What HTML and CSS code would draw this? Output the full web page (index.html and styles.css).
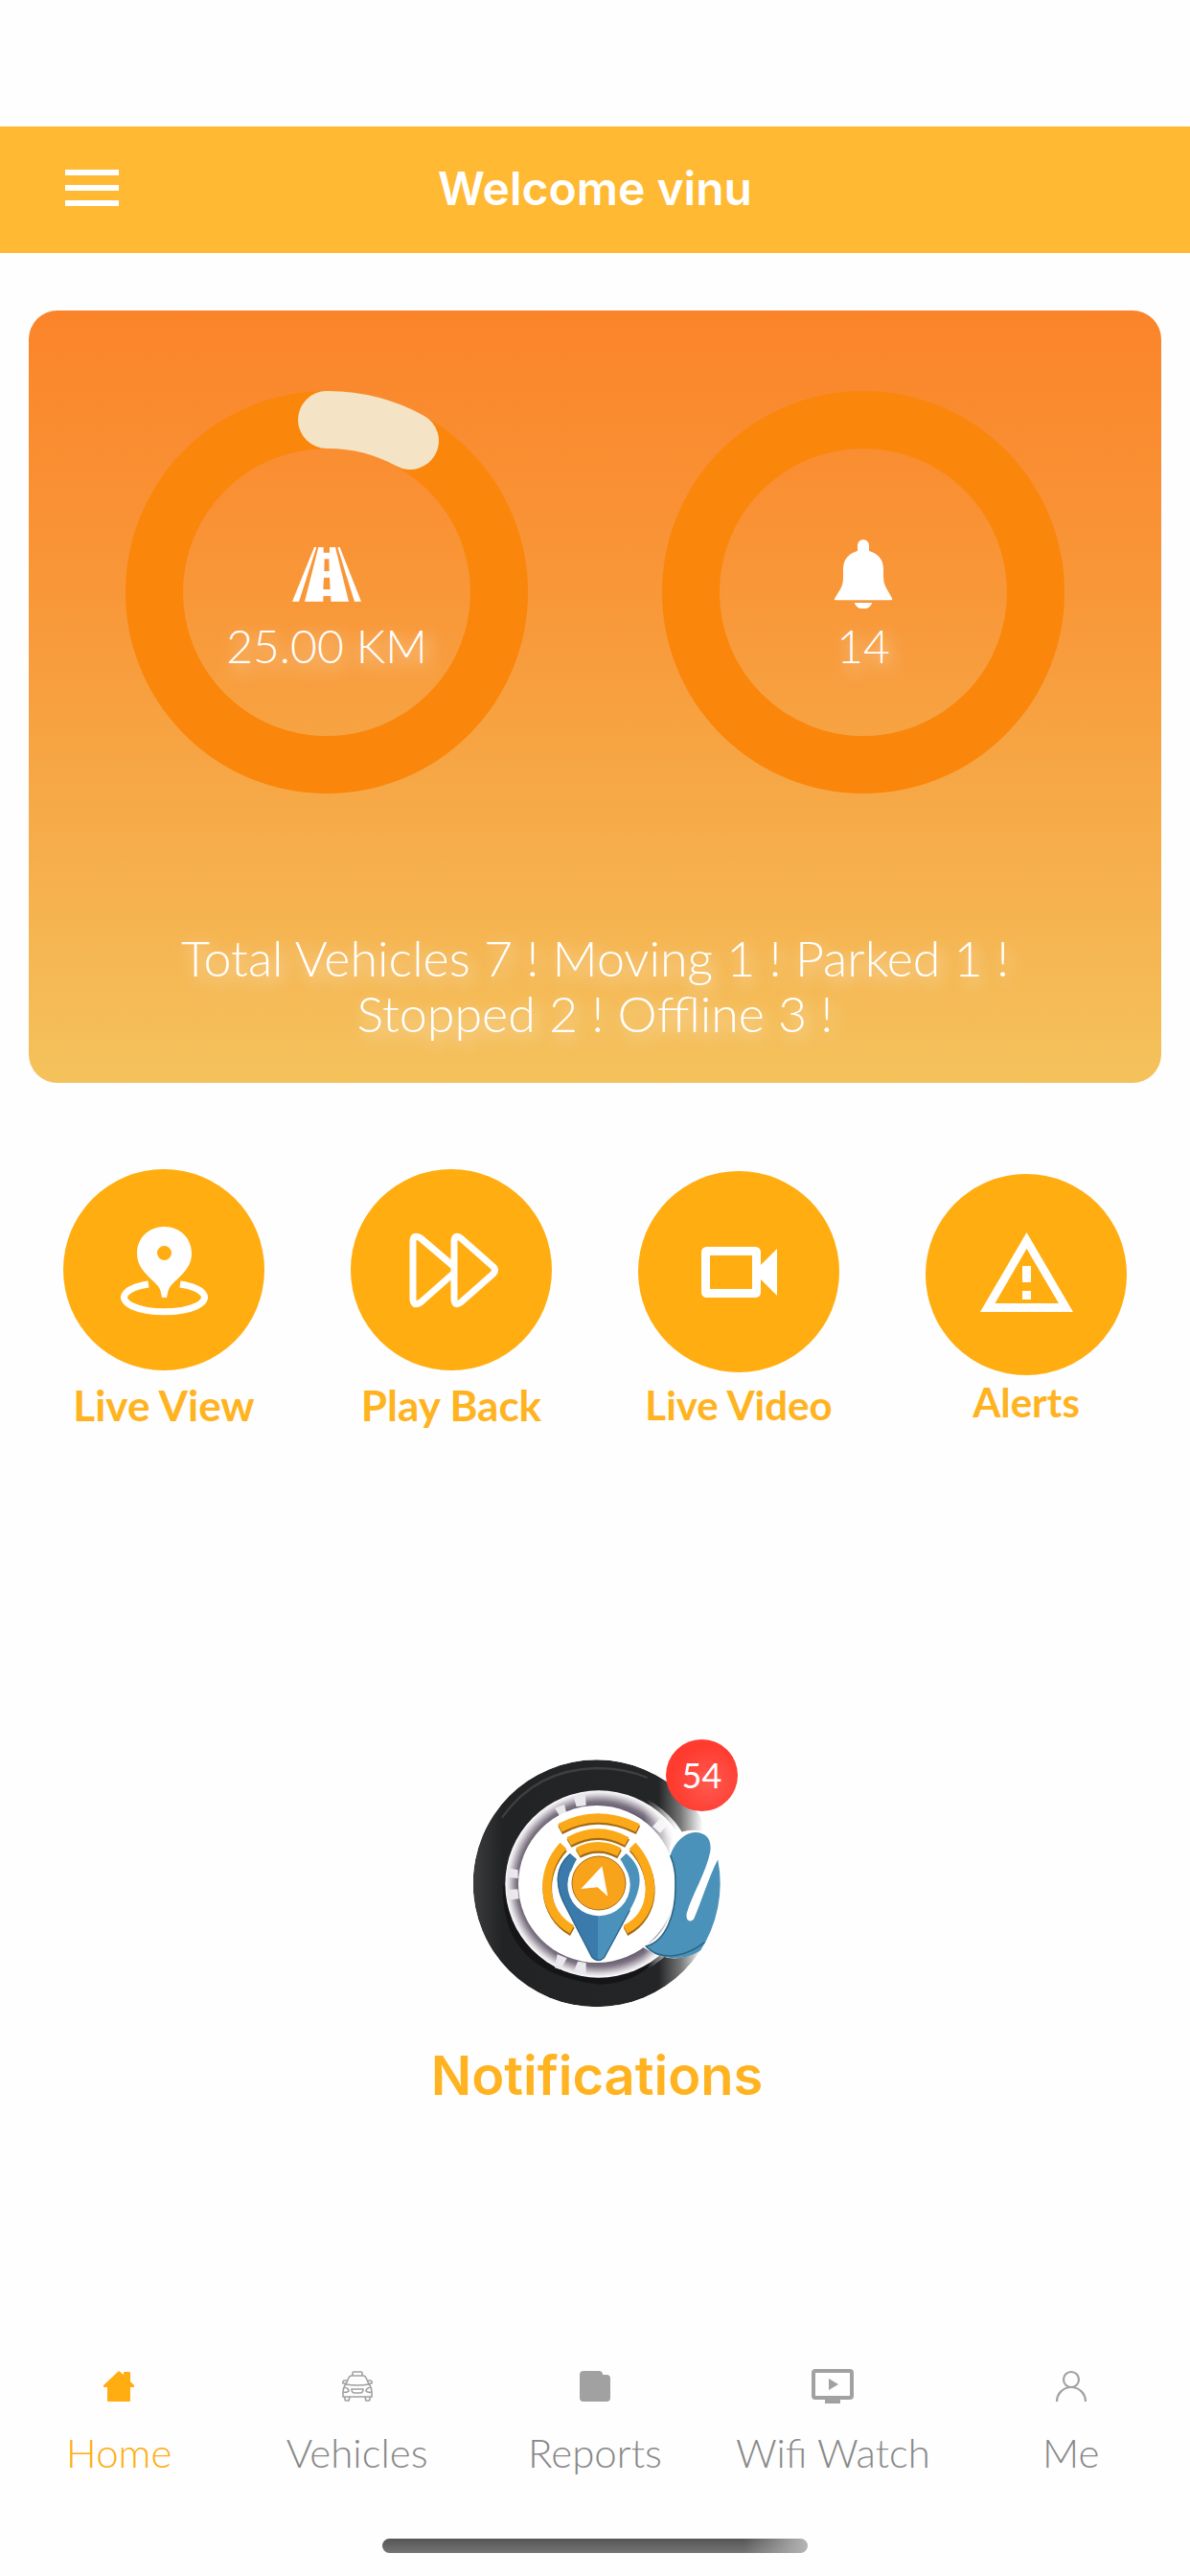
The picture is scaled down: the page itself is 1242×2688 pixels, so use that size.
FILE: index.html
```html
<!DOCTYPE html>
<html lang="en">
<head>
    <meta charset="utf-8">
    <meta name="viewport" content="width=device-width, initial-scale=1">
    <title>Home</title>
    <link rel="stylesheet" href="styles.css">
</head>
<body>
    <header class="topbar">
        <button class="menu" aria-label="Menu">
            <span></span><span></span><span></span>
        </button>
        <h1>Welcome vinu</h1>
    </header>

    <main>
        <section class="summary">
            <div class="rings">
                <div class="ring">
                    <svg class="ring-track" viewBox="0 0 420 420">
                        <circle cx="210" cy="210" r="180" fill="none" stroke="#fa860b" stroke-width="60"/>
                        <path d="M210 30A180 180 0 0 1 297 52" fill="none" stroke="#f4e3c4" stroke-width="60" stroke-linecap="round"/>
                    </svg>
                    <div class="ring-info">
                        <svg viewBox="615 548 216 216" fill="#fff">
                            <path d="M684 572h7L636 742h-21zM757 572h7l67 170h-21z"/>
                            <path fill-rule="evenodd" d="M697 572h16v17h19v-17h18l42 170h-56v-17h-24v17h-58zM716 609l-1 38h16l-1-38zM714 667l-2 37h22l-2-37z"/>
                        </svg>
                        <span>25.00 KM</span>
                    </div>
                </div>
                <div class="ring">
                    <svg class="ring-track" viewBox="0 0 420 420">
                        <circle cx="210" cy="210" r="180" fill="none" stroke="#fa860b" stroke-width="60"/>
                    </svg>
                    <div class="ring-info">
                        <svg viewBox="618 548 216 216" fill="#fff">
                            <path d="M708 583V566a18 18 0 0 1 36 0V583Q789 598 789 640V665Q789 684 797 698L817 733Q817 738 812 738H640Q635 738 636 733L656 700Q663 688 663 665V640Q663 598 708 583z"/>
                            <path d="M698 746h56q-8 19-28 19t-28-19z"/>
                        </svg>
                        <span>14</span>
                    </div>
                </div>
            </div>
            <p>Total Vehicles 7 ! Moving 1 ! Parked 1 ! Stopped 2 ! Offline 3 !</p>
        </section>

        <section class="actions">
            <button class="action">
                <svg viewBox="0 0 210 210">
                    <circle cx="105" cy="105" r="105" fill="#ffad10"/>
                    <path fill="#fff" fill-rule="evenodd" d="M105.500 60C122 60 134 72 134 88C134 104 121 112 112 122C109 126 109 130 108 134H103C102 130 102 126 99 122C90 112 77 104 77 88C77 72 89 60 105.500 60zM105.500 80a7.500 7.500 0 1 0 0 15a7.500 7.500 0 1 0 0-15z"/>
                    <path fill="none" stroke="#fff" stroke-width="7" d="M89 120A42 15 0 1 0 122 120"/>
                </svg>
                <span>Live View</span>
            </button>
            <button class="action">
                <svg viewBox="0 0 210 210">
                    <circle cx="105" cy="105" r="105" fill="#ffad10"/>
                    <g fill="none" stroke="#fff" stroke-width="7" stroke-linejoin="round">
                        <path d="M107 101L73 72Q65 67 65 76V135Q65 144 73 139L107 109"/>
                        <path d="M108 76Q108 67 115 72L149 102Q152 105 149 109L115 139Q108 144 108 135z"/>
                    </g>
                </svg>
                <span>Play Back</span>
            </button>
            <button class="action">
                <svg viewBox="0 0 210 210">
                    <circle cx="105" cy="105" r="105" fill="#ffad10"/>
                    <rect x="70.500" y="83.500" width="53" height="44" rx="1" fill="none" stroke="#fff" stroke-width="9"/>
                    <path fill="#fff" d="M126 100L145 81V130L126 111z"/>
                </svg>
                <span class="small">Live Video</span>
            </button>
            <button class="action tight">
                <svg viewBox="0 0 210 210">
                    <circle cx="105" cy="105" r="105" fill="#ffad10"/>
                    <path fill="#fff" fill-rule="evenodd" d="M105.500 61L154 144H57zM105.500 78L72.500 135H139z"/>
                    <path fill="#fff" d="M101 96h9v17h-9zM101 122h9v9h-9z"/>
                </svg>
                <span class="small">Alerts</span>
            </button>
        </section>

        <a class="notifications" href="#">
            <span class="logo">
                <svg viewBox="225 168 774 777">
                    <defs>
                        <linearGradient id="tyre" x1="0" y1="0" x2="1" y2="0">
                            <stop offset="0" stop-color="#3b3c3e"/>
                            <stop offset=".12" stop-color="#222325"/>
                            <stop offset=".75" stop-color="#242527"/>
                            <stop offset=".84" stop-color="#777"/>
                            <stop offset=".93" stop-color="#fff"/>
                        </linearGradient>
                        <radialGradient id="rim">
                            <stop offset=".82" stop-color="#61566a"/>
                            <stop offset=".88" stop-color="#7d7482"/>
                            <stop offset=".96" stop-color="#dedae0"/>
                            <stop offset="1" stop-color="#fff"/>
                        </radialGradient>
                        <linearGradient id="fade" x1="0" y1="0" x2="1" y2="0">
                            <stop offset=".74" stop-color="#fff" stop-opacity="0"/>
                            <stop offset=".9" stop-color="#fff"/>
                        </linearGradient>
                        <clipPath id="wheel"><circle cx="611" cy="556" r="387"/></clipPath>
                    </defs>
                    <g clip-path="url(#wheel)">
                        <circle cx="611" cy="556" r="387" fill="url(#tyre)"/>
                        <path d="M315 350Q420 200 610 195Q700 195 770 225" fill="none" stroke="#3e3f41" stroke-width="7"/>
                        <path d="M318 560Q310 840 622 872Q720 870 790 805" fill="#151517"/>
                        <circle cx="622" cy="558" r="304" fill="url(#fade)"/>
                        <circle cx="618" cy="558" r="293" fill="url(#rim)"/>
                        <path d="M480 320l30-12 6 24-20 14zM538 282l38-4 2 34-30 4zM786 378l26-28 20 22-22 26zM335 508l30 6v26l-35-4zM330 576l34-2 4 30-38 4zM480 820l8-42 30 12-20 36zM540 830l12-30 26 4v38z" fill="#e9e8ec"/>
                        <circle cx="618" cy="558" r="294" fill="url(#fade)"/>
                        <circle cx="612" cy="558" r="246" fill="#fff"/>
                        <path d="M840 470Q835 380 930 390Q975 395 975 450L1010 470V740L950 745Q870 830 755 755Q860 700 850 560z" fill="#fff"/>
                        <path d="M842 468C850 440 880 396 920 396C955 396 972 420 967 455C955 520 910 590 893 650C890 670 900 680 915 668C940 610 965 530 990 482L1010 470V690C960 770 890 800 830 787C800 784 780 770 766 753C830 735 858 650 858 570C858 520 850 495 842 468z" fill="#4b92ba"/>
                        <path d="M842 468C860 510 858 540 858 570C858 650 830 735 766 753C800 790 870 800 950 740" fill="none" stroke="#2e6684" stroke-width="5"/>
                    </g>
                    <g fill="none" stroke="#a36b13" stroke-width="29" transform="translate(1 5)">
                        <path d="M496 384Q613 320 740 384M524 426Q615 374 706 426M552 459Q615 423 682 460M507 440C430 520 440 650 534 702M723 440C800 520 800 650 701 702"/>
                    </g>
                    <g fill="none" stroke="#fba919" stroke-width="28">
                        <path d="M496 382Q613 320 740 382M524 424Q615 374 706 424M552 457Q615 423 682 458M507 438C430 520 440 650 534 700M723 438C800 520 800 650 701 700"/>
                    </g>
                    <path d="M528 462C480 505 475 560 515 630L596 786Q605 798 616 798V655C540 655 500 560 549 480z" fill="#3a7bac"/>
                    <path d="M704 462C755 505 760 560 715 640L635 788Q625 798 615 798V655C700 655 735 550 685 480z" fill="#4a92bb"/>
                    <path d="M528 464C480 505 480 565 515 630L596 786Q615 806 635 788L715 640" fill="none" stroke="#2f668b" stroke-width="4"/>
                    <circle cx="618" cy="560" r="98" fill="#fff"/>
                    <circle cx="618" cy="555" r="84" fill="#f8a31a" stroke="#a86e18" stroke-width="3"/>
                    <path d="M628 502L646 596L614 568L562 573z" fill="#fff"/>
                </svg>
                <span class="badge">54</span>
            </span>
            <span class="notifications-label">Notifications</span>
        </a>
    </main>

    <nav class="tabs">
        <a class="tab active" href="#">
            <svg viewBox="0 0 32 32" fill="currentColor">
                <path d="M16 0L21 4V2Q21 1 22 1H27Q28 1 28 2V11L32 15V17H28V31Q28 32 27 32H5Q4 32 4 31V17H0V15z"/>
            </svg>
            <span>Home</span>
        </a>
        <a class="tab" href="#">
            <svg viewBox="0 0 32 32" fill="none" stroke="currentColor" stroke-width="1.600">
                <path d="M11 4.500V2q0-1 1-1h8q1 0 1 1v2.500M4 14L7 7Q8 5 10 5H22Q24 5 25 7L28 14M3.500 14Q16 16 28.500 14Q31 18 31 22V27H1V22Q1 18 3.500 14zM5 10L2 10Q0 12 1 13L4 13M27 10L30 10Q32 12 31 13L28 13M10 19H22Q22 23 19 23H13Q10 23 10 19zM2 17Q7 18 7 21Q5 23 1 22M30 17Q25 18 25 21Q27 23 31 22M3 27V30q0 1 1 1h3l1-4M29 27V30q0 1-1 1h-3l-1-4"/>
            </svg>
            <span>Vehicles</span>
        </a>
        <a class="tab" href="#">
            <svg viewBox="0 0 32 32" fill="currentColor">
                <path d="M4 0H20Q24 0 24 4H28Q32 4 32 8V28Q32 32 28 32H4Q0 32 0 28V4Q0 0 4 0z"/>
            </svg>
            <span>Reports</span>
        </a>
        <a class="tab" href="#">
            <svg class="wide" viewBox="0 0 44 36" fill="currentColor">
                <path fill-rule="evenodd" d="M4 0H40Q44 0 44 4V28Q44 32 40 32H30V36H14V32H4Q0 32 0 28V4Q0 0 4 0zM4 4V28H40V4zM18 10L28 16L18 22z"/>
            </svg>
            <span>Wifi Watch</span>
        </a>
        <a class="tab" href="#">
            <svg viewBox="0 0 32 32" fill="none" stroke="currentColor" stroke-width="2.200">
                <circle cx="16" cy="9" r="8"/>
                <path d="M1 32A15 15 0 0 1 31 32"/>
            </svg>
            <span>Me</span>
        </a>
    </nav>
    <div class="home-indicator"></div>
</body>
</html>
```
FILE: styles.css
```css
* {
    margin: 0;
    padding: 0;
    box-sizing: border-box;
}

body {
    min-height: 100vh;
    display: flex;
    flex-direction: column;
    padding-top: 132px;
    background: #fefefe;
    font-family: Lato, "Liberation Sans", sans-serif;
}

button {
    border: none;
    background: none;
    font-family: inherit;
    cursor: pointer;
}

a {
    text-decoration: none;
}

.topbar {
    display: grid;
    grid-template-columns: 60px 1fr 60px;
    align-items: center;
    height: 132px;
    padding: 0 66px 4px;
    background: #ffb932;
}

.topbar h1 {
    font-family: Inter, sans-serif;
    font-size: 48px;
    font-weight: 600;
    text-align: center;
    color: #fff;
}

.menu {
    display: flex;
    flex-direction: column;
    gap: 10px;
    padding: 0 2px;
}

.menu span {
    height: 6px;
    background: #fff;
}

.summary {
    margin: 60px 30px 0;
    padding: 84px 120px 44px;
    border-radius: 30px;
    background: linear-gradient(#fb842a, #f8993a 40%, #f4c25c);
}

.rings {
    display: flex;
    justify-content: center;
    gap: 140px;
    margin: 0 -20px;
}

.ring {
    display: grid;
    width: 420px;
}

.ring > * {
    grid-area: 1 / 1;
}

.ring-info {
    display: flex;
    flex-direction: column;
    align-items: center;
    justify-content: center;
    gap: 10px;
    padding-top: 30px;
}

.ring-info svg {
    width: 72px;
    height: 72px;
}

.ring-info span,
.summary p {
    font-size: 48px;
    font-weight: 300;
    line-height: 58px;
    color: #fff;
    text-shadow: 4px 6px 18px rgba(255, 255, 255, 0.8);
}

.summary p {
    margin-top: 142px;
    font-size: 52px;
    text-align: center;
}

.actions {
    display: grid;
    grid-template-columns: repeat(4, 1fr);
    align-items: center;
    padding: 90px 21px 0;
}

.action {
    display: flex;
    flex-direction: column;
    align-items: center;
    gap: 10px;
    font-size: 44px;
    font-weight: 700;
    line-height: 52px;
    color: #ffb320;
}

.action svg {
    width: 210px;
    height: 210px;
}

.action .small {
    font-size: 42px;
    line-height: 48px;
}

.action.tight {
    gap: 4px;
}

.notifications {
    display: flex;
    flex-direction: column;
    align-items: center;
    margin-top: 344px;
    padding-left: 4px;
}

.logo {
    position: relative;
    display: block;
}

.logo svg {
    display: block;
    width: 258px;
    height: 259px;
}

.badge {
    position: absolute;
    top: -21px;
    right: -18px;
    width: 75px;
    height: 75px;
    border-radius: 50%;
    background: radial-gradient(circle at 60% 60%, #ff5a50, #ff3b30 60%);
    font-size: 36px;
    line-height: 75px;
    text-align: center;
    color: #fff;
}

.notifications-label {
    margin-top: 36px;
    font-family: Inter, sans-serif;
    font-size: 56px;
    font-weight: 600;
    line-height: 70px;
    color: #ffb320;
}

.tabs {
    display: grid;
    grid-template-columns: repeat(5, 1fr);
    margin-top: auto;
}

.tab {
    display: flex;
    flex-direction: column;
    align-items: center;
    gap: 27px;
    font-size: 42px;
    font-weight: 300;
    line-height: 48px;
    color: #888;
}

.tab svg {
    width: 32px;
    height: 36px;
    color: #a1a1a1;
}

.tab .wide {
    width: 44px;
}

.tab.active,
.tab.active svg {
    color: #ffad10;
}

.home-indicator {
    width: 444px;
    height: 15px;
    margin: 66px auto 24px;
    border-radius: 8px;
    background: linear-gradient(to right, transparent 85%, #b5b5b5), linear-gradient(#555, #747474);
}
```
